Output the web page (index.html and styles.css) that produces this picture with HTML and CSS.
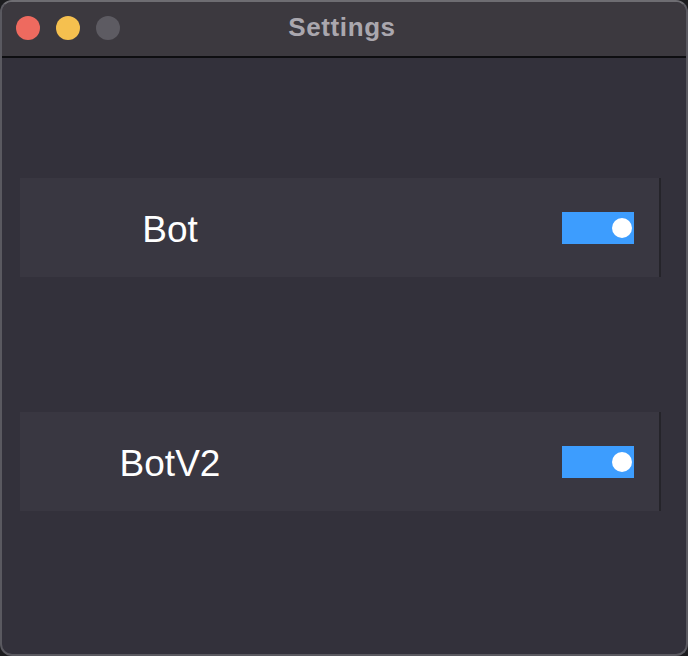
FILE: index.html
```html
<!DOCTYPE html>
<html>
<head>
<meta charset="utf-8">
<title>Settings</title>
<link rel="stylesheet" href="styles.css">
</head>
<body>
<div class="window">
  <div class="titlebar">
    <div class="lights">
      <span class="light red"></span>
      <span class="light yellow"></span>
      <span class="light gray"></span>
    </div>
    <div class="title">Settings</div>
  </div>
  <div class="content">
    <div class="row">
      <div class="label">Bot</div>
      <div class="toggle on"><span class="knob"></span></div>
    </div>
    <div class="row">
      <div class="label">BotV2</div>
      <div class="toggle on"><span class="knob"></span></div>
    </div>
  </div>
</div>
</body>
</html>
```

FILE: styles.css
```css
html, body {
  margin: 0;
  padding: 0;
  background: #1c1c1f;
}
.window {
  box-sizing: border-box;
  width: 688px;
  height: 656px;
  border: 2px solid #5a5960;
  border-top-color: #6e6d72;
  border-radius: 12px;
  background: #33313b;
  overflow: hidden;
  font-family: "Liberation Sans", Arial, sans-serif;
  display: flex;
  flex-direction: column;
}
.titlebar {
  position: relative;
  height: 54px;
  flex: none;
  background: #3c393f;
  border-bottom: 2px solid #0e0e11;
  display: flex;
  align-items: center;
  justify-content: center;
}
.lights {
  position: absolute;
  left: 14px;
  top: 14px;
  display: flex;
  gap: 16px;
}
.light {
  width: 24px;
  height: 24px;
  border-radius: 50%;
  display: block;
}
.red { background: #ee6a5f; }
.yellow { background: #f5c04f; }
.gray { background: #5d5b62; }
.title {
  color: #aaa7ae;
  font-size: 26px;
  font-weight: bold;
  letter-spacing: 0.6px;
  margin-top: -3px;
  margin-left: -4px;
}
.content {
  display: flex;
  flex-direction: column;
  gap: 135px;
  padding: 120px 0 0 18px;
}
.row {
  width: 639px;
  height: 99px;
  background: #393741;
  border-right: 2px solid #25242a;
  display: flex;
  align-items: center;
}
.label {
  width: 300px;
  text-align: center;
  color: #ffffff;
  font-size: 37px;
  margin-top: 4px;
}
.toggle {
  margin-left: auto;
  margin-right: 25px;
  width: 72px;
  height: 32px;
  background: #3d9dfe;
  display: flex;
  align-items: center;
  justify-content: flex-end;
  padding-right: 2px;
  box-sizing: border-box;
  margin-top: 1px;
}
.knob {
  width: 20px;
  height: 20px;
  border-radius: 50%;
  background: #ffffff;
  display: block;
}
```
